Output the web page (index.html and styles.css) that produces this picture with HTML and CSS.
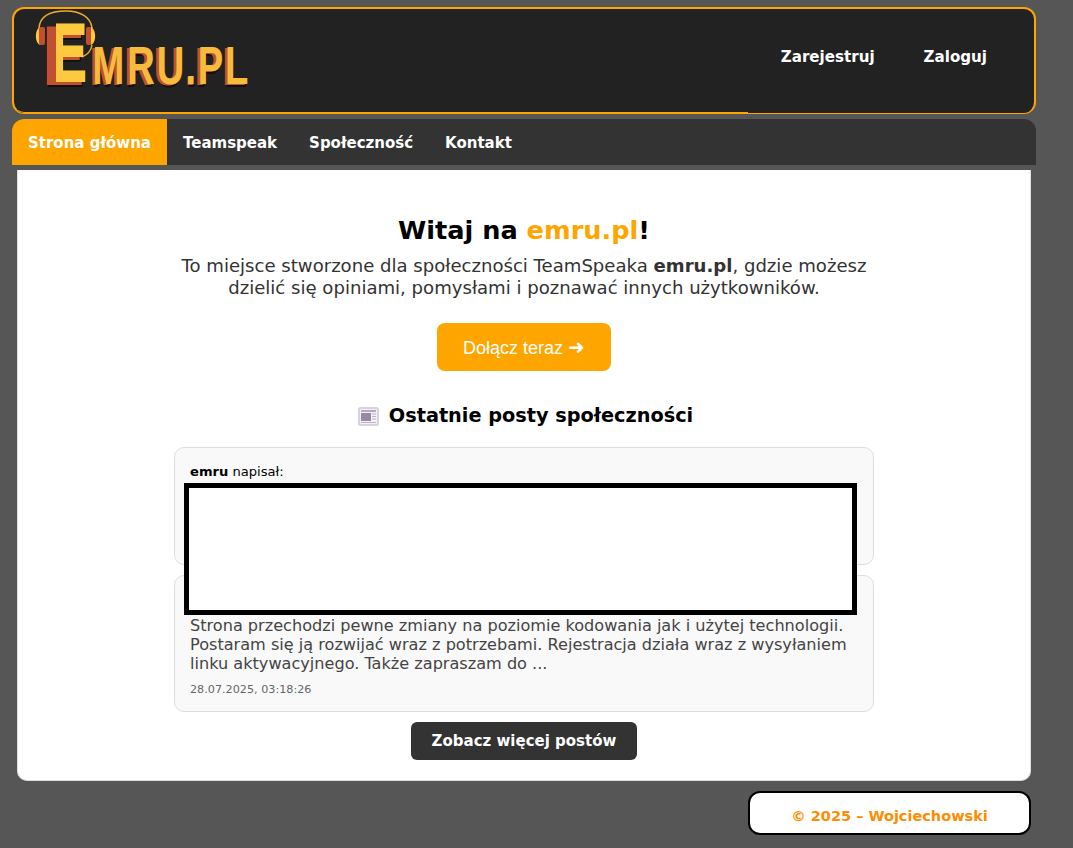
FILE: index.html
```html
<!DOCTYPE html>
<html lang="pl">
<head>
	<meta charset="utf-8" />
	<title>emru.pl</title>
	<link rel="stylesheet" href="styles.css">
</head>
<body>
	<div id="container">
		<header class="topbar">
			<div class="brand">
				<svg class="logo" width="230" height="90" viewBox="0 0 230 90" role="img" aria-label="Emru.pl">
					<defs>
						<clipPath id="e-arms"><rect x="25" y="-80" width="60" height="90"/></clipPath>
					</defs>
					<path d="M4 19 C5 6 17 2 31 2 C45 2 56 8 57 19" fill="none" stroke="#e9ae2f" stroke-width="1.5"/>
					<path d="M57 36 C56 42 52 46 47 48" fill="none" stroke="#e9ae2f" stroke-width="1.5"/>
					<path d="M5 18 C0 20 -1 33 5 36 Z" fill="#fdc93e"/>
					<rect x="4" y="18" width="6" height="18" rx="2" fill="#c14f30"/>
					<rect x="51" y="18" width="6" height="18" rx="2" fill="#c14f30"/>
					<path d="M56 18 C61 20 62 33 56 36 Z" fill="#fdc93e"/>
					<g class="logo-big">
						<g transform="translate(0,76) scale(.84,1)">
							<text class="logo-shade" x="8" y="1.5">E</text>
							<text class="logo-red" x="7">E</text>
							<text class="logo-gold" x="11" y="-3" clip-path="url(#e-arms)">E</text>
						</g>
					</g>
					<g class="logo-small">
						<g transform="translate(0,76) scale(.72,1)">
							<text class="logo-shade" x="78 126 167 210 224 262" y="1.5">MRU.PL</text>
							<text class="logo-red" x="76 124 165 208 222 260">MRU.PL</text>
							<text class="logo-amber" x="80 128 169 209 226 264" y="-1">MRU.PL</text>
						</g>
					</g>
				</svg>
			</div>
			<nav class="account">
				<a href="#">Zarejestruj</a>
				<a href="#">Zaloguj</a>
			</nav>
		</header>

		<nav class="menu">
			<a class="active" href="#">Strona główna</a>
			<a href="#">Teamspeak</a>
			<a href="#">Społeczność</a>
			<a href="#">Kontakt</a>
		</nav>

		<main class="content">
			<h1>Witaj na <span class="accent">emru.pl</span>!</h1>
			<p class="lead">To miejsce stworzone dla społeczności TeamSpeaka <strong>emru.pl</strong>, gdzie możesz dzielić się opiniami, pomysłami i poznawać innych użytkowników.</p>
			<a class="join" href="#">Dołącz teraz <span class="arrow">➜</span></a>

			<h2>
				<svg class="news-icon" width="21" height="19" viewBox="0 0 21 19">
					<rect x="0" y="0" width="21" height="19" rx="2.5" fill="#d8d2de"/>
					<rect x="2" y="2" width="17" height="15" rx="1" fill="#f3f1f5"/>
					<rect x="3" y="3" width="15" height="2" fill="#b5abc0"/>
					<rect x="3" y="6" width="10" height="8" fill="#968aa3"/>
					<path d="M14 7H18M14 9.5H18M14 12H18M3 15.5H18" stroke="#bdb3c6" stroke-width="1"/>
				</svg>
				Ostatnie posty społeczności
			</h2>

			<div class="posts">
				<article class="post post-first">
					<div class="author"><strong>emru</strong> napisał:</div>
				</article>
				<article class="post">
					<div class="author"><strong>emru</strong> napisał:</div>
					<p>Strona przechodzi pewne zmiany na poziomie kodowania jak i użytej technologii. Postaram się ją rozwijać wraz z potrzebami. Rejestracja działa wraz z wysyłaniem linku aktywacyjnego. Także zapraszam do ...</p>
					<div class="date">28.07.2025, 03:18:26</div>
				</article>
				<div class="redacted"></div>
			</div>

			<a class="more" href="#">Zobacz więcej postów</a>
		</main>

		<footer class="foot">© 2025 – Wojciechowski</footer>
	</div>
</body>
</html>
```

FILE: styles.css
```css
body {
	margin: 0;
	background-color: #565656;
	font-family: "DejaVu Sans", Verdana, sans-serif;
}

#container {
	width: 1024px;
	margin-left: 12px;
	padding-top: 7px;
	padding-bottom: 13px;
}

a {
	text-decoration: none;
}

.topbar {
	box-sizing: border-box;
	height: 107px;
	display: flex;
	background-color: #222;
	border: 2px solid orange;
	border-bottom-width: 1px;
	border-radius: 12px;
}

.brand {
	box-sizing: border-box;
	width: 734px;
	border-bottom: 1px solid orange;
	border-bottom-left-radius: 10px;
	padding: 0 0 0 21px;
}

.logo {
	display: block;
	overflow: visible;
}

.logo text {
	font-weight: bold;
}

.logo-big {
	font-family: "DejaVu Sans", sans-serif;
	font-size: 80px;
}

.logo-small {
	font-family: "Liberation Sans", sans-serif;
	font-size: 53px;
}

.logo-shade {
	fill: #111;
}

.logo-red {
	fill: #c14f30;
}

.logo-gold {
	fill: #fdc93e;
}

.logo-amber {
	fill: #f5bb3c;
}

.account {
	flex: 1;
	display: flex;
	justify-content: flex-end;
	align-items: center;
	gap: 49px;
	padding: 0 47px 8px 0;
}

.account a {
	color: #fff;
	font-size: 15.1px;
	font-weight: bold;
}

.menu {
	margin-top: 5px;
	height: 46px;
	display: flex;
	background-color: #333;
	border-radius: 12px 12px 0 0;
	overflow: hidden;
}

.menu a {
	padding: 0 16px;
	line-height: 48px;
	color: #fff;
	font-size: 15px;
	font-weight: bold;
}

.menu a.active {
	background-color: orange;
}

.content {
	box-sizing: border-box;
	margin: 5px 5px 0;
	height: 611px;
	padding-top: 42px;
	display: flex;
	flex-direction: column;
	align-items: center;
	background-color: #fff;
	border: 1px solid #ddd;
	border-top: none;
	border-radius: 0 0 10px 10px;
}

h1 {
	margin: 0;
	font-size: 25.6px;
	line-height: 36px;
	color: #000;
}

.accent {
	color: orange;
}

.lead {
	width: 700px;
	margin: 7px 0 0;
	text-align: center;
	font-size: 18.08px;
	line-height: 22px;
	color: #333;
}

.join {
	margin-top: 24px;
	width: 174px;
	line-height: 50px;
	height: 48px;
	text-align: center;
	background-color: orange;
	color: #fff;
	border-radius: 8px;
	font-family: "Liberation Sans", Arial, sans-serif;
	font-size: 18px;
}

.arrow {
	font-size: 20px;
	line-height: 1;
}

h2 {
	margin: 31px 0 0 3px;
	display: flex;
	align-items: center;
	gap: 10px;
	font-size: 19.3px;
	line-height: 28px;
	color: #000;
}

.posts {
	position: relative;
	width: 700px;
	margin-top: 17px;
}

.post {
	box-sizing: border-box;
	padding: 16px 15px 0;
	margin-bottom: 10px;
	background-color: #f9f9f9;
	border: 1px solid #ddd;
	border-radius: 10px;
}

.post-first {
	height: 118px;
}

.post:not(.post-first) {
	height: 137px;
}

.author {
	font-size: 13.1px;
	line-height: 16px;
	color: #000;
}

.post p {
	margin: 8px 0 0;
	font-size: 16.12px;
	line-height: 19px;
	color: #444;
}

.date {
	margin-top: 10px;
	font-size: 11.2px;
	line-height: 14px;
	color: #666;
}

/* covers the hidden part of the posts */
.redacted {
	position: absolute;
	left: 10px;
	top: 36px;
	box-sizing: border-box;
	width: 673px;
	height: 132px;
	background-color: #fff;
	border: 5px solid #000;
}

.more {
	width: 226px;
	line-height: 38px;
	text-align: center;
	background-color: #333;
	color: #fff;
	border-radius: 6px;
	font-size: 15px;
	font-weight: bold;
}

.foot {
	box-sizing: border-box;
	width: 283px;
	height: 44px;
	margin: 10px 5px 0 auto;
	line-height: 46px;
	text-align: center;
	background-color: #fff;
	color: #ff8c00;
	border: 2px solid #000;
	border-radius: 12px;
	font-size: 14.5px;
	font-weight: bold;
}
```
